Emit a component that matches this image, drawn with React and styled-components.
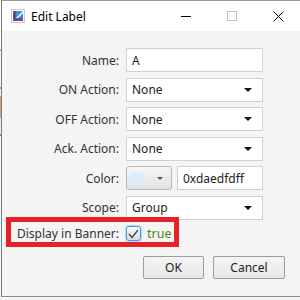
import React from 'react'
import styled, { createGlobalStyle } from 'styled-components'

const GlobalStyle = createGlobalStyle`
html, body {
    margin: 0;
    padding: 0;
    background: #fbfbfb;
}
`

const Desktop = styled.div`
width: 300px;
height: 300px;
overflow: hidden;
display: flex;
align-items: flex-start;
background: linear-gradient(to bottom, #fff 0, #fff 49px, #9fb4c8 49px, #9fb4c8 51px, #f4f4f4 51px,
    #f4f4f4 87px, #999 87px, #999 89px, #f2f2f2 89px, #f2f2f2 96px, #d9a27a 96px, #d9a27a 118px,
    #eee 118px, #eee 134px, #888 134px, #888 136px, #f6f6f6 136px);
`

const Window = styled.div`
margin-left: 1px;
width: 299px;
height: 295px;
flex: none;
display: flex;
flex-direction: column;
border-left: 1px solid #7a7a7a;
border-top: 1px solid #9a9a9a;
border-bottom: 1px solid #8a8a8a;
background: #f4f4f4;
font-family: "Noto Sans", "Open Sans", sans-serif;
font-size: 12px;
`

const TitleBar = styled.div`
height: 30px;
flex: none;
display: flex;
align-items: center;
background: #fff;
padding-left: 9px;
`

const Title = styled.span`
margin-left: 6px;
flex: 1;
color: #000;
font-size: 12px;
`

const CaptionButton = styled.div`
width: 46px;
height: 30px;
display: flex;
align-items: center;
justify-content: center;
`

const Body = styled.div`
flex: 1;
display: flex;
flex-direction: column;
padding-top: 17px;
`

const Form = styled.div`
display: grid;
grid-template-columns: 117px 137px;
column-gap: 7px;
row-gap: 5.5px;
`

const Label = styled.label`
display: flex;
align-items: center;
justify-content: flex-end;
color: #333;
white-space: nowrap;
`

const Field = styled.div`
height: 24px;
box-sizing: border-box;
display: flex;
align-items: center;
background: #fff;
border: 1px solid #d0d0d0;
padding: 0 ${p => (p.$combo ? 10 : 4)}px 0 5px;
color: #222;
justify-content: space-between;
`

const Arrow = styled.span`
width: 0;
height: 0;
border-left: ${p => p.$w}px solid transparent;
border-right: ${p => p.$w}px solid transparent;
border-top: ${p => p.$h}px solid ${p => p.$color};
`

const ColorRow = styled.div`
display: flex;
gap: 5px;
height: 24px;
`

const ColorButton = styled.div`
width: 46px;
height: 24px;
box-sizing: border-box;
border: 1px solid #b8b8b8;
border-radius: 3px;
background: linear-gradient(#f6f6f6, #e2e2e2);
display: flex;
align-items: center;
padding: 0 8px 0 4px;
justify-content: space-between;
`

const Swatch = styled.span`
width: 12px;
height: 12px;
background: ${p => p.$color};
`

const BannerRow = styled.div`
grid-column: 1 / -1;
display: grid;
grid-template-columns: 117px 137px;
column-gap: 7px;
height: 16px;
position: relative;

&::after {
    content: '';
    position: absolute;
    left: 4px;
    top: -8px;
    width: 173px;
    height: 30px;
    box-sizing: border-box;
    border: 5px solid #e8202a;
}
`

const CheckWrap = styled.div`
display: flex;
align-items: center;
gap: 6px;
`

const CheckBox = styled.span`
width: 15px;
height: 15px;
box-sizing: border-box;
border: 1px solid #3d98dc;
border-radius: 3px;
box-shadow: 0 0 0 1px #b9dcf6;
background: linear-gradient(#fafafa, #dedede);
display: flex;
align-items: center;
justify-content: center;
`

const TrueText = styled.span`
color: #4b8a12;
font-size: 12.5px;
`

const ButtonBar = styled.div`
display: flex;
justify-content: flex-end;
gap: 9px;
margin-top: 15px;
padding-right: 16px;
`

const Button = styled.button`
width: ${p => p.$w}px;
height: 23px;
box-sizing: border-box;
border: 1px solid #9c9c9c;
border-radius: 2px;
background: linear-gradient(#f4f4f4, #e8e8e8);
font-family: inherit;
font-size: 12px;
color: #222;
padding: 0;
`

const AppIcon = () => (
    <svg width="14" height="14" viewBox="0 0 14 14">
        <rect x="0.5" y="0.5" width="13" height="13" fill="#fff" stroke="#c8c8c8" />
        <polygon points="2,2 5,2 5,9 12,9 12,12 2,12" fill="#6b4a8e" />
        <polygon points="5,2 12,2 12,9 5,9" fill="#3d8fd0" />
        <polygon points="5,9 12,2 12,4 7,9" fill="#fff" />
    </svg>
)

const Combo = ({ value }) => (
    <Field $combo>
        <span>{value}</span>
        <Arrow $w={4} $h={4} $color="#111" />
    </Field>
)

const App = () => {
    return (
        <Desktop>
            <GlobalStyle />
            <Window>
                <TitleBar>
                    <AppIcon />
                    <Title>Edit Label</Title>
                    <CaptionButton>
                        <svg width="10" height="10"><line x1="0" y1="5.5" x2="10" y2="5.5" stroke="#000" /></svg>
                    </CaptionButton>
                    <CaptionButton>
                        <svg width="10" height="10"><rect x="0.5" y="0.5" width="9" height="9" fill="none" stroke="#c4c4c4" /></svg>
                    </CaptionButton>
                    <CaptionButton>
                        <svg width="11" height="11"><path d="M0.5 0.5 L10.5 10.5 M10.5 0.5 L0.5 10.5" stroke="#000" /></svg>
                    </CaptionButton>
                </TitleBar>
                <Body>
                    <Form>
                        <Label>Name:</Label>
                        <Field>A</Field>
                        <Label>ON Action:</Label>
                        <Combo value="None" />
                        <Label>OFF Action:</Label>
                        <Combo value="None" />
                        <Label>Ack. Action:</Label>
                        <Combo value="None" />
                        <Label>Color:</Label>
                        <ColorRow>
                            <ColorButton>
                                <Swatch $color="#daedfd" />
                                <Arrow $w={3.5} $h={3.5} $color="#555" />
                            </ColorButton>
                            <Field style={{ flex: 1 }}>0xdaedfdff</Field>
                        </ColorRow>
                        <Label>Scope:</Label>
                        <Combo value="Group" />
                        <BannerRow>
                            <Label>Display in Banner:</Label>
                            <CheckWrap>
                                <CheckBox>
                                    <svg width="11" height="10" viewBox="0 0 11 10">
                                        <path d="M1 5 L4 8.5 L10 1" fill="none" stroke="#555" strokeWidth="1.6" />
                                    </svg>
                                </CheckBox>
                                <TrueText>true</TrueText>
                            </CheckWrap>
                        </BannerRow>
                    </Form>
                    <ButtonBar>
                        <Button $w={61}>OK</Button>
                        <Button $w={72}>Cancel</Button>
                    </ButtonBar>
                </Body>
            </Window>
        </Desktop>
    )
}

export default App
